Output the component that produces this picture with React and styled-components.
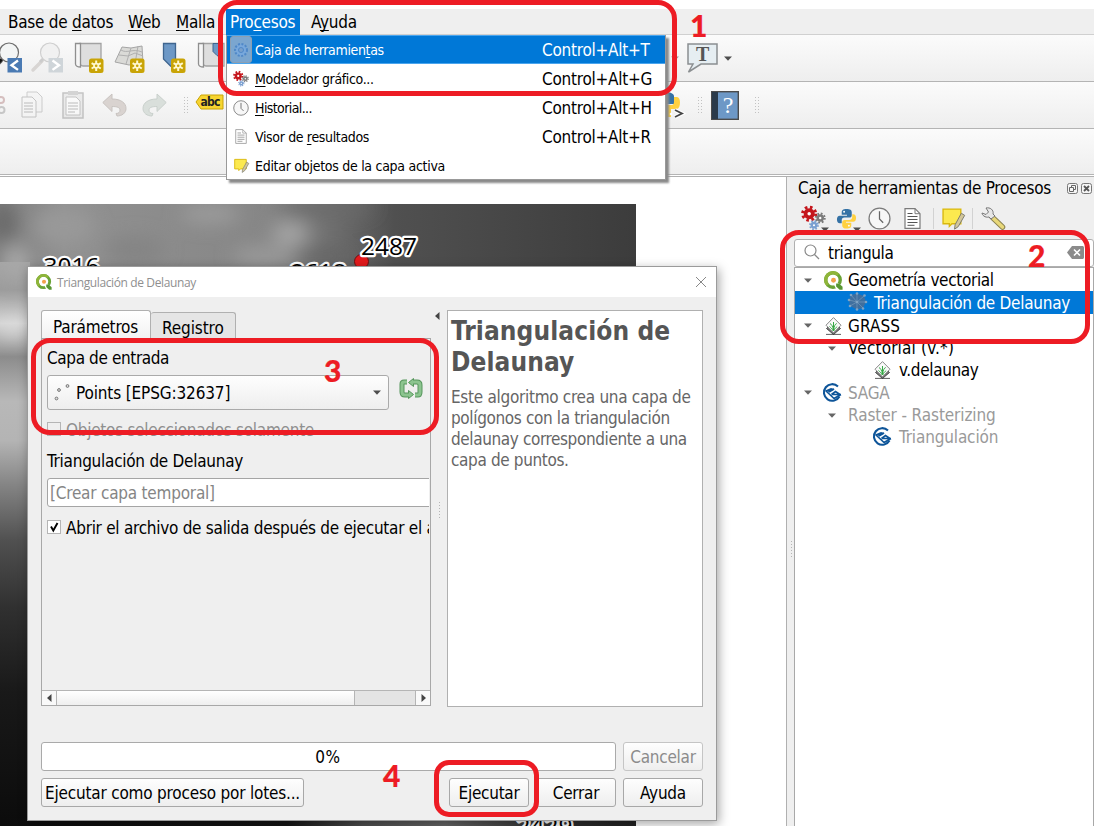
import React from "react";
import styled, { createGlobalStyle } from "styled-components";

const Global = createGlobalStyle`
  * { box-sizing: border-box; }
  html, body { margin: 0; padding: 0; }
  body {
    width: 1094px; height: 826px; overflow: hidden; background: #fff;
    font-family: "DejaVu Sans Condensed", "DejaVu Sans", sans-serif;
    font-stretch: condensed;
    font-size: 17px; letter-spacing: -0.26px; color: #000;
  }
  u { text-decoration-thickness: 1px; text-underline-offset: 2px; text-decoration-skip-ink: none; }
  svg { display: block; flex: none; overflow: visible; }
`;

const Screen = styled.div`
  position: relative; width: 1094px; height: 826px; overflow: hidden;
  display: flex; flex-direction: column; padding-top: 9px; background: #fff;
`;
const MenuBar = styled.nav`
  display: flex; height: 26px; flex: none; background: #efefef; border-bottom: 1px solid #d0d0d0;
`;
const MenuTitle = styled.div`
  width: ${(p) => p.$w}px; flex: none; padding-left: ${(p) => p.$pad}px;
  height: ${(p) => (p.$on ? 26 : 25)}px; line-height: 26px; white-space: nowrap;
  color: ${(p) => (p.$on ? "#fff" : "#000")}; background: ${(p) => (p.$on ? "#0078d7" : "none")};
`;
const ToolBar = styled.div`
  display: flex; align-items: center; flex: none; height: ${(p) => p.$h}px;
  background: linear-gradient(#fbfbfb, #eeeeee); border-bottom: 1px solid #b4b4b4;
`;
const Icon = styled.svg`
  margin-left: ${(p) => p.$ml || 0}px; margin-top: ${(p) => p.$mt || 0}px;
  opacity: ${(p) => p.$o ?? 1};
`;
const Grip = styled.div`
  width: 5px; height: 18px; flex: none; margin-left: ${(p) => p.$ml || 0}px;
  background: radial-gradient(circle, #c2c2c2 0.7px, transparent 1px) 0 0 / 3px 3px;
`;
const Work = styled.div`
  display: flex; flex: 1; margin-top: 1px; border-top: 1px solid #b0b0b0; min-height: 0;
`;
const MapPane = styled.main`
  width: 787px; flex: none; padding-top: 27px; border-right: 1px solid #b0b0b0; background: #fff; overflow: hidden;
`;
const Dock = styled.aside`
  flex: 1; display: flex; background: #efefef;
`;
const DockSplit = styled.div`
  width: 7px; flex: none; padding: 364px 0 0 4px;
`;
const Dots = styled.div`
  width: 1px; height: 17px;
  background: repeating-linear-gradient(#b5b5b5 0 1px, transparent 1px 3px);
`;
const DockBody = styled.div`
  flex: 1; display: flex; flex-direction: column; min-width: 0;
`;
const DockTitle = styled.div`
  display: flex; align-items: center; height: 22px; padding-left: 4px; white-space: nowrap;
  letter-spacing: -0.25px;
`;
const TitleText = styled.span`width: 269px; flex: none;`;
const DockTools = styled.div`
  display: flex; align-items: center; height: 40px; padding: 0 0 1px 7px;
`;
const Separator = styled.i`
  width: 1px; height: 21px; background: #d2d2d2; margin-left: ${(p) => p.$ml}px;
`;
const Search = styled.div`
  display: flex; align-items: center; height: 28px; border: 1px solid #b0b0b0; border-radius: 3px;
  background: #fff; padding: 0 9px; 
`;
const SearchText = styled.span`flex: 1; padding-left: 8px; letter-spacing: -0.34px;`;
const Tree = styled.div`
  flex: 1; border: 1px solid #a8a8a8; border-bottom: 0; background: #fff; padding-top: 1px;
`;
const TreeRow = styled.div`
  display: flex; align-items: center; height: ${(p) => p.$h || 22}px; padding-left: ${(p) => p.$in}px;
  color: ${(p) => (p.$sel ? "#fff" : p.$off ? "#9a9a9a" : "#000")};
  background: ${(p) => (p.$sel ? "#0078d7" : "none")}; white-space: nowrap;
  letter-spacing: ${(p) => p.$ls ?? -0.26}px;
  & > span { margin-left: ${(p) => p.$gap ?? 6}px; }
`;

const Popup = styled.div`
  position: absolute; left: 226px; top: 35px; width: 440px; height: 145px; background: #fff;
  border: 1px solid #999; border-top: 0; box-shadow: 3px 3px 2px #8a8a8a;
`;
const PopupRow = styled.div`
  display: flex; align-items: center; height: 29px; padding: 0 13px 0 3px;
  color: ${(p) => (p.$on ? "#fff" : "#000")}; background: ${(p) => (p.$on ? "#0078d7" : "none")};
  box-shadow: ${(p) => (p.$on ? "inset 0 1px #4aa5ee, inset 0 -1px #4aa5ee" : "none")};
`;
const IconCell = styled.div`
  width: 22px; height: 27px; display: flex; align-items: center; justify-content: center; border-radius: 3px;
  background: ${(p) => (p.$on ? "#7ba6cf" : "none")}; border: 1px solid ${(p) => (p.$on ? "#8c9fb2" : "transparent")};
`;
const PopupLabel = styled.span`
  flex: 1; font-size: 14px; padding-left: 3px; letter-spacing: ${(p) => p.$ls ?? -0.35}px; white-space: nowrap;
`;
const Shortcut = styled.span`width: 110px; flex: none; letter-spacing: -0.25px; white-space: nowrap;`;

const Dialog = styled.section`
  position: absolute; left: 27px; top: 266px; width: 690px; height: 555px; background: #efefef;
  border: 1px solid #9b9b9b; box-shadow: 2px 3px 10px rgba(0, 0, 0, 0.35);
  display: flex; flex-direction: column;
`;
const DialogTitle = styled.header`
  height: 30px; flex: none; display: flex; align-items: center; background: #fff; padding: 0 9px 0 8px;
  font: 12px "Open Sans", "Noto Sans", sans-serif; letter-spacing: -0.38px; color: #8f8f8f;
  & > span { flex: 1; padding-left: 5px; }
`;
const DialogMain = styled.div`
  display: flex; height: 397px; margin: 13px 13px 0; align-items: stretch;
`;
const LeftSide = styled.div`width: 390px; display: flex; flex-direction: column;`;
const Tabs = styled.div`display: flex; align-items: flex-end; height: 28px;`;
const Tab = styled.div`
  width: ${(p) => p.$w}px; height: ${(p) => (p.$on ? 28 : 26)}px; line-height: ${(p) => (p.$on ? 33 : 31)}px;
  padding-left: 11px; border: 1px solid #b0b0b0; border-bottom: 0; overflow: hidden;
  border-left: ${(p) => (p.$on ? "1px solid #b0b0b0" : 0)};
  border-radius: 3px 3px 0 0; background: ${(p) => (p.$on ? "linear-gradient(#fff, #f2f2f2)" : "#e5e5e5")};
  letter-spacing: ${(p) => p.$ls}px;
`;
const Panel = styled.div`
  flex: none; height: 368px; border: 1px solid #a8a8a8; display: flex; flex-direction: column; overflow: hidden;
`;
const Form = styled.div`
  flex: 1; width: 387px; overflow: hidden; padding: 7px 0 0 5px; white-space: nowrap;
`;
const Label = styled.div`
  height: 24px; line-height: 24px; margin-top: ${(p) => p.$mt || 0}px; letter-spacing: ${(p) => p.$ls}px;
`;
const ComboRow = styled.div`display: flex; margin-top: 5px;`;
const Combo = styled.div`
  display: flex; align-items: center; width: 342px; height: 35px; border: 1px solid #aaa; border-radius: 3px;
  background: linear-gradient(#fefefe, #eeeeee); padding: 0 7px 0 6px;
  & > span { flex: 1; padding-left: 6px; letter-spacing: -0.14px; }
`;
const CheckRow = styled.div`
  display: flex; align-items: center; height: 22px; margin-top: ${(p) => p.$mt}px;
  color: ${(p) => (p.$off ? "#8f8f8f" : "#000")}; letter-spacing: ${(p) => p.$ls}px;
`;
const Box = styled.div`
  width: 14px; height: 14px; border: 1px solid #b5b5b5; background: ${(p) => (p.$off ? "#efefef" : "#fff")};
  margin: 0 5px 2px 0; flex: none;
`;
const Field = styled.div`
  width: 400px; height: 29px; line-height: 28px; border: 1px solid #a5a5a5; border-radius: 3px; background: #fff;
  margin-top: 5px; padding-left: 2px; color: #858585; letter-spacing: -0.22px;
`;
const ScrollBar = styled.div`
  display: flex; height: 15px; flex: none; width: 388px; border-top: 1px solid #b5b5b5; background: #e4e4e4;
`;
const ScrollEnd = styled.div`
  width: 15px; display: flex; align-items: center; justify-content: center; background: #f9f9f9;
  border: solid #b5b5b5; border-width: ${(p) => (p.$right ? "0 0 0 1px" : "0 1px 0 0")};
`;
const Thumb = styled.div`
  width: 298px; background: linear-gradient(#fff, #efefef); border-right: 1px solid #b5b5b5; margin-right: auto;
`;
const Splitter = styled.div`
  width: 16px; display: flex; flex-direction: column; padding: 2px 0 0 4px;
`;
const SplitDots = styled(Dots)`margin: 182px 0 0 4px;`;
const Help = styled.article`
  width: 256px; border: 1px solid #b0b0b0; background: #fff; padding: 5px 0 0 3px; color: #666;
  line-height: 21px; white-space: nowrap;
  h1 { margin: 0 0 9px; font-size: 26px; line-height: 31px; color: #555; letter-spacing: 0.1px; }
`;
const HelpLine = styled.div`letter-spacing: ${(p) => p.$ls}px;`;
const Footer = styled.footer`display: flex; flex-direction: column; gap: 7px; margin: 35px 13px 0;`;
const FooterRow = styled.div`display: flex; gap: 7px;`;
const Progress = styled.div`
  flex: 1; height: 29px; border: 1px solid #aaa; border-radius: 3px; background: #fff;
  text-align: center; line-height: 29px; letter-spacing: 0.5px; padding-right: 1px;
`;
const Button = styled.button`
  width: ${(p) => p.$w || 80}px; height: 29px; padding: 1px 0 0; border: 1px solid ${(p) => (p.disabled ? "#c5c5c5" : "#a8a8a8")};
  border-radius: 3px; background: linear-gradient(#fefefe, #eeeeee); font: inherit; white-space: nowrap;
  letter-spacing: ${(p) => p.$ls ?? -0.26}px; color: ${(p) => (p.disabled ? "#8c8c8c" : "#000")};
  margin-right: ${(p) => p.$mr || 0};
`;
const Ring = styled.div`
  position: absolute; left: ${(p) => p.$x}px; top: ${(p) => p.$y}px; width: ${(p) => p.$w}px; height: ${(p) => p.$h}px;
  border: 5px solid #ed1c24; border-radius: ${(p) => p.$r || 19}px;
`;
const Step = styled.div`
  position: absolute; left: ${(p) => p.$x}px; top: ${(p) => p.$y}px; color: #ed1c24;
  font: 900 30px/30px Lato, sans-serif; letter-spacing: 0; -webkit-text-stroke: 0.2px #ed1c24;
`;

const Gear = ({ x, y, r, c, hole = "#fff" }) => (
  <g transform={`translate(${x} ${y})`}>
    <circle r={r * 0.83} fill="none" stroke={c} strokeWidth={r * 0.38} strokeDasharray={`${(r * 0.83 * Math.PI) / 8}`} />
    <circle r={r * 0.7} fill={c} />
    <circle r={r * 0.22} fill={hole} />
  </g>
);
const Gears = ({ w = 26, ...p }) => (
  <Icon {...p} width={w} height={w} viewBox="0 0 26 26">
    <Gear x={8.5} y={8} r={8.2} c="#c4161c" /><Gear x={20} y={12.5} r={5.6} c="#7b7b7b" /><Gear x={13.5} y={20} r={5} c="#7a9fd0" />
  </Icon>
);
const Caret = ({ c = "#4d4d4d", ...p }) => (
  <Icon {...p} width="8" height="5" viewBox="0 0 8 5"><path d="M0 .5h8L4 4.8z" fill={c} /></Icon>
);
const Star = () => (
  <g>
    <rect width="14.5" height="14.5" rx="2.5" fill="#c9a406" />
    <path d="M7.2 2v10.6M2.6 4.6l9.2 5.4M2.6 10l9.2-5.4" stroke="#fff8d0" strokeWidth="2" />
    <circle cx="7.2" cy="7.3" r="3" fill="#fff8d0" /><circle cx="7.2" cy="7.3" r="1.3" fill="#c9a406" />
  </g>
);
const Lens = ({ off, back, w, vb, ...p }) => (
  <Icon {...p} width={w} height="32" viewBox={vb}>
    <path d="M11 19 2 28" stroke={off ? "#d8d5d3" : "#555"} strokeWidth="3.500" strokeLinecap="round" />
    <path d="M13 16l-4 4" stroke={off ? "#ccc" : "#111"} strokeWidth="3" />
    <circle cx="19" cy="10.500" r="9.500" fill={off ? "#f1f1f1" : "#f3f5f5"} stroke={off ? "#cfcfcf" : "#6d6d6d"} strokeWidth="1.200" />
    <rect x="17.500" y="16" width="14.500" height="14.500" fill={off ? "#cfd5d9" : "#4a7ab3"} />
    <path d={back ? "M28 18.500l-6.500 4.700 6.500 4.700" : "M21.500 18.500l6.500 4.700-6.500 4.700"} fill="none" stroke="#fff" strokeWidth="2.400" />
  </Icon>
);
const ScrollMap = () => (
  <g>
    <path d="M6 1.500h21V24H9c-3 0-3-3-3-4z" fill="#dedede" stroke="#a2a2a2" strokeWidth="1.300" />
    <path d="M1.500 1.500h5V25c-3 0-5-1-5-3z" fill="#f6f6f6" stroke="#8f8f8f" strokeWidth="1.300" />
  </g>
);
const Note = ({ w = 22, ...p }) => (
  <Icon {...p} width={w} height={w} viewBox="0 0 22 22">
    <path d="M1 2h17v14H9.500L7 18.500V16H1z" fill="#fce94f" stroke="#d9b80e" strokeWidth="1.300" />
    <path d="M18.500 6l-6 11-.5 4.200 3.500-2.400L21.700 8z" fill="#d3c79a" stroke="#77776d" strokeWidth=".9" />
  </Icon>
);
const Clock = ({ w = 22, ...p }) => (
  <Icon {...p} width={w} height={w} viewBox="0 0 22 22">
    <circle cx="11" cy="11" r="10" fill="#f7f7f7" stroke="#7b7b7b" strokeWidth="1.200" />
    <path d="M11 4v7.500l3.500 3.500" fill="none" stroke="#666" strokeWidth="1.200" />
  </Icon>
);
const Doc = ({ w = 17, h = 21, ...p }) => (
  <Icon {...p} width={w} height={h} viewBox="0 0 17 21">
    <path d="M1 .7h10l5 5v14.600H1z" fill="#fff" stroke="#7b7b7b" strokeWidth="1.200" /><path d="M11 .7v5h5" fill="none" stroke="#7b7b7b" />
    <path d="M3.500 5.500h5M3.500 8.500h10M3.500 11.500h10M3.500 14.500h10M3.500 17.300h7" stroke="#555" />
  </Icon>
);
const Python = ({ w = 21, ...p }) => (
  <Icon {...p} width={w} height={w} viewBox="0 0 22 22">
    <path d="M11 1C7 1 6 2.500 6 4.500V7h5.500v1H4C2 8 1 9.500 1 12s1 4 3 4h2v-3c0-2 1-3 3-3h5c1.500 0 2.500-1 2.500-2.500v-3C16.500 2 15 1 11 1z" fill="#3572a5" />
    <path d="M11 21.500c4 0 5-1.500 5-3.500v-2.500h-5.500v-1H18c2 0 3-1.500 3-4s-1-4-3-4h-1v3c0 2-1.500 3-3 3H9c-1.500 0-2.500 1-2.500 2.500v3c0 2.500 1.500 3.500 4.500 3.500z" fill="#ffd140" />
    <circle cx="8.500" cy="4" r="1" fill="#fff" /><circle cx="13.500" cy="18.500" r="1" fill="#fff" />
  </Icon>
);
const QLogo = ({ w = 18, ...p }) => (
  <Icon {...p} width={w} height={w} viewBox="0 0 18 18">
    <circle cx="8.500" cy="8.500" r="6.900" fill="none" stroke="#6aa336" strokeWidth="3.200" />
    <path d="M3.600 13.400A6.900 6.900 0 0 1 13.400 3.600" fill="none" stroke="#8fb53a" strokeWidth="3.200" />
    <path d="M10 9.500l8 5V18h-6l-3-6z" fill="#fff" />
    <path d="M11.500 11.800h2.800l3.300 3.200v2.800h-2.800l-3.300-3.200z" fill="#589632" />
    <circle cx="9" cy="8.800" r="2.300" fill="#f3a24c" />
  </Icon>
);
const Grass = (p) => (
  <Icon {...p} width="17" height="18" viewBox="0 0 17 18">
    <path d="M8.500 4.500 15.500 11.500l-7 6-7-6zM1 17.400h15" fill="#777" stroke="#333" strokeWidth=".8" />
    <path d="M8.500.6 16 8.200l-7.500 7.600L1 8.200z" fill="#fafafa" stroke="#8a8a8a" />
    <path d="M8.500 14V5M8.300 13C8 9 6 7 5 6.500M8.700 13c.3-4 1.500-6 3-6.500M8.300 14C7 11.500 5.500 10.500 4.500 9.500M8.700 14c1-2.500 2.500-3.500 3.500-4.500" fill="none" stroke="#35a845" strokeWidth="1" />
  </Icon>
);
const Saga = (p) => (
  <Icon {...p} width="20" height="20" viewBox="0 0 20 20">
    <path d="M16 3.500A8.300 8.300 0 1 0 17.500 13.500" fill="none" stroke="#0e5599" strokeWidth="2.100" />
    <path d="M3 7.500 9 5l3.500 1-5.500 3z" fill="#0e5599" />
    <path d="M7 9l5-3M3.500 7.500 12 15.500M9.500 11.500H19M12 15.500l7-4M9.500 11.500l4-3 4.500 3" fill="none" stroke="#0e5599" strokeWidth="1.700" />
  </Icon>
);
const Mesh = (p) => (
  <Icon {...p} width="19" height="19" viewBox="0 0 19 19">
    <path d="M3 3l6-1.500L16 4l2 6-3 6-6 1.500L2 14l-1-6z" fill="#3f6f9f" />
    <path d="M3 3l6 7 7-6M1 8l8 2-7 4M9 10l9 0M9 10l6 6M9 10v7.500M9 1.500V10" fill="none" stroke="#6f93b5" strokeWidth=".8" />
    <g fill="#7fa3c4"><circle cx="3" cy="3" r="1.300" /><circle cx="9" cy="1.500" r="1.300" /><circle cx="16.500" cy="3.500" r="1.300" /><circle cx="18" cy="10" r="1.300" /><circle cx="15" cy="16.500" r="1.300" /><circle cx="9" cy="17.500" r="1.300" /><circle cx="2" cy="14" r="1.300" /><circle cx="1" cy="8" r="1.300" /><circle cx="9" cy="10" r="1.300" /></g>
  </Icon>
);
const Undo = ({ flip, ...p }) => (
  <Icon {...p} width="25" height="24" viewBox="0 0 25 24">
    <path transform={flip ? "matrix(-1 0 0 1 25 0)" : undefined}
      d="M.8 9.500 10 1v5c9 0 14 4 14 9.500 0 4.500-4 7.500-9 7.500l-1-2.500c3 0 4-1.500 4-3.500 0-2.500-3-3.500-8-3.500v5z"
      fill={flip ? "#d9dfdb" : "#d9d3d0"} stroke={flip ? "#c9d0cc" : "#c8c3c0"} />
  </Icon>
);

const MapCanvas = styled.svg`
  overflow: hidden; font-stretch: normal;
`;
const MapView = () => (
  <MapCanvas width="636" height="622" viewBox="0 204 636 622">
    <defs>
      <linearGradient id="east" x1="0" x2="1">
        <stop offset="0" stopColor="#808080" /><stop offset=".1" stopColor="#919191" /><stop offset=".45" stopColor="#858585" />
        <stop offset=".53" stopColor="#6c6c6c" /><stop offset=".62" stopColor="#505050" /><stop offset="1" stopColor="#3c3c3c" />
      </linearGradient>
      <linearGradient id="west" x1="0" x2="0" y1="0" y2="1">
        <stop offset="0" stopColor="#a4a4a4" /><stop offset=".05" stopColor="#9c9c9c" />
        <stop offset=".11" stopColor="#d4d4d4" /><stop offset=".17" stopColor="#8c8c8c" /><stop offset=".25" stopColor="#b8b8b8" />
        <stop offset=".32" stopColor="#b4b4b4" /><stop offset=".4" stopColor="#848484" /><stop offset=".5" stopColor="#505050" />
        <stop offset=".62" stopColor="#303030" /><stop offset=".77" stopColor="#191919" /><stop offset="1" stopColor="#0c0c0c" />
      </linearGradient>
      <linearGradient id="south" x1="0" x2="1"><stop offset="0" stopColor="#0c0c0c" /><stop offset=".45" stopColor="#151515" /><stop offset=".57" stopColor="#4e4e4e" /><stop offset=".7" stopColor="#666" /><stop offset=".85" stopColor="#333" /><stop offset="1" stopColor="#222" /></linearGradient>
      <filter id="soft" x="-50%" y="-50%" width="200%" height="200%"><feGaussianBlur stdDeviation="9" /></filter>
    </defs>
    <rect y="204" width="636" height="70" fill="url(#east)" />
    <rect y="262" width="30" height="558" fill="url(#west)" />
    <rect y="818" width="636" height="8" fill="url(#south)" />
    <g filter="url(#soft)">
      <ellipse cx="3" cy="222" rx="14" ry="20" fill="#6a6a6a" />
      <ellipse cx="16" cy="262" rx="14" ry="16" fill="#a8a8a8" />
      <ellipse cx="64" cy="226" rx="30" ry="18" fill="#999" />
      <ellipse cx="135" cy="250" rx="30" ry="14" fill="#848484" />
      <ellipse cx="210" cy="214" rx="30" ry="10" fill="#9b9b9b" />
      <ellipse cx="290" cy="234" rx="18" ry="12" fill="#a4a4a4" />
      <ellipse cx="262" cy="256" rx="30" ry="10" fill="#9a9a9a" />
      <ellipse cx="325" cy="208" rx="50" ry="8" fill="#6a6a6a" />
      <ellipse cx="325" cy="256" rx="28" ry="6" fill="#606060" />
      <ellipse cx="12" cy="328" rx="7" ry="9" fill="#e4e4e4" />
    </g>
    <circle cx="361.500" cy="261.500" r="7" fill="#e31a1c" stroke="#701010" />
    <g fontFamily="Open Sans, Noto Sans, sans-serif" fontSize="24.500" letterSpacing="0" fill="#000" stroke="#fff" strokeWidth="4.500" strokeLinejoin="round" paintOrder="stroke">
      <text x="43.500" y="275">3016</text><text x="290.500" y="281">2618</text><text x="361" y="254.500">2487</text><text x="516.500" y="835">2429</text>
    </g>
  </MapCanvas>
);

export default function App() {
  return (
    <>
      <Global />
      <Screen>
        <MenuBar>
          <MenuTitle $w={128} $pad={8}>Base de <u>d</u>atos</MenuTitle>
          <MenuTitle $w={48} $pad={0}><u>W</u>eb</MenuTitle>
          <MenuTitle $w={50} $pad={0}><u>M</u>alla</MenuTitle>
          <MenuTitle $w={74} $pad={4} $on>Pro<u>c</u>esos</MenuTitle>
          <MenuTitle $w={70} $pad={11}>A<u>y</u>uda</MenuTitle>
        </MenuBar>
        <ToolBar $h={47}>
          <Lens back w={22} vb="10 0 22 32" />
          <Lens off $ml={9} w={32} vb="0 0 32 32" />
          <Icon $ml={11} width="31" height="32" viewBox="0 0 31 32"><ScrollMap /><g transform="translate(15 16.500)"><Star /></g></Icon>
          <Icon $ml={9} width="31" height="32" viewBox="0 0 31 32">
            <path d="M8 5l9 1 11-2 1 17-14 2-14-3z" fill="#dadad7" stroke="#a5a5a5" />
            <path d="M5 13l9 1 7-3 8 3M17 6l-5 16M24 4l-3 18M7 8c6 4 12-2 21 2" fill="none" stroke="#b0b0b0" />
            <g transform="translate(16 16.500)"><Star /></g>
          </Icon>
          <Icon $ml={17} width="24" height="32" viewBox="0 0 24 32"><path d="M1.500 1.500h12V27l-5-3-7-7z" fill="#6d98c6" stroke="#3f658f" strokeWidth="1.300" /><g transform="translate(9 16.500)"><Star /></g></Icon>
          <Icon $ml={11} width="29" height="32" viewBox="0 0 29 32"><ScrollMap /><path d="M16 1.500h8v14l-4-2-4-4z" fill="#6d98c6" stroke="#3f658f" /></Icon>
          <Caret $ml={445} c="#999" />
          <Icon $ml={8} width="31" height="30" viewBox="0 0 31 30">
            <path d="M1 1h29v20H14L1.500 29 6 21H1z" fill="#e6eef2" stroke="#8b8f91" strokeWidth="1.500" />
            <text x="15.500" y="18" textAnchor="middle" fontFamily="Liberation Serif, serif" fontWeight="700" fontSize="20" fill="#555">T</text>
          </Icon>
          <Caret $ml={6} />
        </ToolBar>
        <ToolBar $h={47}>
          <Icon width="6" height="22" viewBox="0 0 6 22" $o={0.6}><circle cx="1" cy="6" r="3" fill="none" stroke="#c09a9a" strokeWidth="2" /><circle cx="1.500" cy="16" r="3" fill="none" stroke="#aaa" strokeWidth="2" /></Icon>
          <Icon $ml={15} width="23" height="28" viewBox="0 0 23 28" $o={0.45}>
            <path d="M6 1h10l5 5v15H6z" fill="#f2f2f2" stroke="#999" /><path d="M1 6h10l4 4v16H1z" fill="#f7f7f7" stroke="#888" /><path d="M3 12h9M3 15h9M3 18h9M3 21h9" stroke="#777" />
          </Icon>
          <Icon $ml={18} width="23" height="28" viewBox="0 0 23 28" $o={0.45}>
            <rect x="1" y="2" width="20" height="25" fill="#ddd" stroke="#888" strokeWidth="1.500" /><rect x="6" y="0" width="10" height="4" fill="#aaa" /><path d="M4 6h10l4 4v14H4z" fill="#fff" stroke="#888" /><path d="M6 12h10M6 15h10M6 18h10M6 21h7" stroke="#777" />
          </Icon>
          <Undo $ml={17} /><Undo $ml={15} flip />
          <Grip $ml={16} />
          <Icon $ml={7} $mt={-7} width="29" height="16" viewBox="0 0 29 16">
            <path d="M1 8 6 1h22v14H6z" fill="#f7d431" stroke="#c9a406" />
            <text x="5.500" y="12" fontSize="12" fontWeight="700" letterSpacing="0" textLength="20" fill="#222">abc</text>
          </Icon>
          <Icon $ml={435} width="26" height="30" viewBox="0 0 26 30">
            <path d="M2 6c0-5 12-5 13 0v8H2z" fill="#3572a5" /><path d="M15 7h3c4 0 4 11 0 12h-6v8H2V15h10c3 0 3-2 3-4z" fill="#ffd140" /><circle cx="12" cy="24" r="1.300" fill="#fff" />
            <path d="M16 20l7 3.500-7 3.500" fill="none" stroke="#fff" strokeWidth="4" /><path d="M16 20l7 3.500-7 3.500" fill="none" stroke="#444" strokeWidth="1.800" />
          </Icon>
          <Grip $ml={12} />
          <Icon $ml={9} width="28" height="29" viewBox="0 0 28 29">
            <rect x=".7" y=".7" width="26.600" height="27.600" fill="#6d98c6" stroke="#4b4b4b" strokeWidth="1.400" /><rect x="1" y="1" width="6" height="27" fill="#2a3a4a" />
            <text x="17" y="21.500" textAnchor="middle" fontFamily="Liberation Serif, serif" fontSize="24" fill="#fff">?</text>
          </Icon>
          <Grip $ml={15} />
        </ToolBar>
        <ToolBar $h={46} />
        <Work>
          <MapPane><MapView /></MapPane>
          <Dock>
            <DockSplit><Dots /></DockSplit>
            <DockBody>
              <DockTitle>
                <TitleText>Caja de herramientas de Procesos</TitleText>
                <Icon $ml={0} width="11" height="11" viewBox="0 0 11 11"><rect x=".5" y=".5" width="10" height="10" rx="2" fill="#f5f5f5" stroke="#777" /><path d="M4.500 4V2.500h4v4H7M2.500 4.500H6.500v4h-4z" fill="none" stroke="#666" /></Icon>
                <Icon $ml={3} width="11" height="11" viewBox="0 0 11 11"><rect x=".5" y=".5" width="10" height="10" rx="2" fill="#f5f5f5" stroke="#777" /><path d="M3 3l5 5M8 3l-5 5" stroke="#555" strokeWidth="1.800" /></Icon>
              </DockTitle>
              <DockTools>
                <Gears w={25} /><Caret $ml={-5} $mt={21} />
                <Python $ml={7} w={21} /><Caret $ml={-4} $mt={21} />
                <Clock $ml={7} w={23} />
                <Doc $ml={13} />
                <Separator $ml={12} /><Note $ml={8} w={23} /><Separator $ml={7} />
                <Icon $ml={8} width="25" height="24" viewBox="0 0 25 24">
                  <path d="M11 10 21.500 20" stroke="#8a8250" strokeWidth="5.500" strokeLinecap="round" /><path d="M12 11l9.500 9" stroke="#e8d87a" strokeWidth="3.600" strokeLinecap="round" />
                  <path d="M5 1c4-1 8 2 7 6l2 2-4 3-2-2C4 11 1 8 1 6l4 1.500L7.500 5z" fill="#e6e6e6" stroke="#777" />
                </Icon>
              </DockTools>
              <Search>
                <Icon $mt={-2} width="16" height="16" viewBox="0 0 16 16"><circle cx="6.500" cy="6.500" r="5.500" fill="none" stroke="#888" strokeWidth="1.200" /><path d="M10.500 10.500l4.500 4.500" stroke="#888" strokeWidth="1.300" /></Icon>
                <SearchText>triangula</SearchText>
                <Icon $mt={-2} width="17" height="13" viewBox="0 0 17 13"><path d="M0 6.500 5 0h10c1.500 0 2 .5 2 2v9c0 1.500-.5 2-2 2H5z" fill="#8b8b8b" /><path d="M7 3.500l6 6M13 3.500l-6 6" stroke="#fff" strokeWidth="1.600" /></Icon>
              </Search>
              <Tree>
                <TreeRow $in={9} $h={22} $ls={-0.33} $gap={5}><Caret c="#666" /><QLogo $ml={12} w={19} /><span>Geometría vectorial</span></TreeRow>
                <TreeRow $in={53} $h={23} $sel $ls={-0.26} $gap={7}><Mesh $mt={-3} /><span>Triangulación de Delaunay</span></TreeRow>
                <TreeRow $in={9} $h={23} $ls={0.05}><Caret c="#666" /><Grass $ml={13} /><span>GRASS</span></TreeRow>
                <TreeRow $in={33} $h={22} $gap={12} $ls={0.17}><Caret c="#666" /><span>Vectorial (v.*)</span></TreeRow>
                <TreeRow $in={79} $h={22} $gap={8} $ls={-0.36}><Grass /><span>v.delaunay</span></TreeRow>
                <TreeRow $in={9} $h={23} $off><Caret c="#666" /><Saga $ml={10} /><span>SAGA</span></TreeRow>
                <TreeRow $in={33} $h={22} $gap={12} $off $ls={-0.1}><Caret c="#666" /><span>Raster - Rasterizing</span></TreeRow>
                <TreeRow $in={77} $h={22} $gap={7} $off $ls={-0.15}><Saga /><span>Triangulación</span></TreeRow>
              </Tree>
            </DockBody>
          </Dock>
        </Work>

        <Popup>
          <PopupRow $on><IconCell $on><Icon width="16" height="16" viewBox="0 0 16 16"><circle cx="8" cy="8" r="6" fill="#78a8dc" stroke="#4f88c8" strokeDasharray="2 1.500" strokeWidth="2" /><circle cx="8" cy="8" r="2.500" fill="#78a0cc" stroke="#4f88c8" /></Icon></IconCell><PopupLabel>Caja de herramien<u>t</u>as</PopupLabel><Shortcut>Control+Alt+T</Shortcut></PopupRow>
          <PopupRow><IconCell><Gears w={16} /></IconCell><PopupLabel><u>M</u>odelador gráfico...</PopupLabel><Shortcut>Control+Alt+G</Shortcut></PopupRow>
          <PopupRow><IconCell><Clock w={16} /></IconCell><PopupLabel $ls={-0.6}><u>H</u>istorial...</PopupLabel><Shortcut>Control+Alt+H</Shortcut></PopupRow>
          <PopupRow><IconCell><Doc w={12} h={15} $o={0.75} /></IconCell><PopupLabel>Visor de <u>r</u>esultados</PopupLabel><Shortcut>Control+Alt+R</Shortcut></PopupRow>
          <PopupRow><IconCell><Note w={15} /></IconCell><PopupLabel $ls={-0.28}>Editar objetos de la capa activa</PopupLabel></PopupRow>
        </Popup>

        <Dialog>
          <DialogTitle>
            <QLogo w={16} /><span>Triangulación de Delaunay</span>
            <Icon width="12" height="12" viewBox="0 0 12 12"><path d="M1 1l10 10M11 1L1 11" stroke="#888" /></Icon>
          </DialogTitle>
          <DialogMain>
            <LeftSide>
              <Tabs><Tab $w={110} $on $ls={-0.2}>Parámetros</Tab><Tab $w={85} $ls={-0.1}>Registro</Tab></Tabs>
              <Panel>
                <Form>
                  <Label $ls={-0.38}>Capa de entrada</Label>
                  <ComboRow>
                    <Combo>
                      <Icon width="16" height="17" viewBox="0 0 16 17"><g fill="#ddd" stroke="#777"><circle cx="2.500" cy="14.500" r="1.400" /><circle cx="5" cy="6" r="1.400" /><circle cx="13.500" cy="2" r="1.400" /></g></Icon>
                      <span>Points [EPSG:32637]</span><Caret />
                    </Combo>
                    <Icon $ml={10} $mt={3} width="24" height="21" viewBox="0 0 24 21">
                      <path d="M8 4H5Q3 4 3 6v8q0 3 3 3h5M16 17h3q2 0 2-3V7q0-3-3-3h-5" stroke="#56965c" strokeWidth="5" fill="none" />
                      <path d="M9.500 12.500v8l5-4zM14.500.5v8l-5-4z" fill="#8cc48f" stroke="#56965c" />
                      <path d="M8 4H5Q3 4 3 6v8q0 3 3 3h5M16 17h3q2 0 2-3V7q0-3-3-3h-5" stroke="#8cc48f" strokeWidth="3" fill="none" />
                    </Icon>
                  </ComboRow>
                  <CheckRow $mt={9} $off $ls={-0.27}><Box $off />Objetos seleccionados solamente</CheckRow>
                  <Label $mt={8} $ls={-0.26}>Triangulación de Delaunay</Label>
                  <Field>[Crear capa temporal]</Field>
                  <CheckRow $mt={10} $ls={-0.27}><Box><svg width="12" height="12" viewBox="0 0 12 12"><path d="M3 5.500l2.300 4L9.500 2" fill="none" stroke="#000" strokeWidth="1.900" /></svg></Box>Abrir el archivo de salida después de ejecutar el algoritmo</CheckRow>
                </Form>
                <ScrollBar>
                  <ScrollEnd><svg width="5" height="8" viewBox="0 0 5 8"><path d="M4.500 0v8L0 4z" fill="#444" /></svg></ScrollEnd>
                  <Thumb />
                  <ScrollEnd $right><svg width="5" height="8" viewBox="0 0 5 8"><path d="M.5 0v8L5 4z" fill="#444" /></svg></ScrollEnd>
                </ScrollBar>
              </Panel>
            </LeftSide>
            <Splitter><svg width="5" height="8" viewBox="0 0 5 8"><path d="M4.500 0v8L0 4z" fill="#444" /></svg><SplitDots /></Splitter>
            <Help>
              <h1>Triangulación de<br />Delaunay</h1>
              <HelpLine $ls={-0.29}>Este algoritmo crea una capa de</HelpLine>
              <HelpLine $ls={-0.36}>polígonos con la triangulación</HelpLine>
              <HelpLine $ls={-0.39}>delaunay correspondiente a una</HelpLine>
              <HelpLine $ls={-0.36}>capa de puntos.</HelpLine>
            </Help>
          </DialogMain>
          <Footer>
            <FooterRow><Progress>0%</Progress><Button disabled>Cancelar</Button></FooterRow>
            <FooterRow><Button $w={263} $mr="auto" $ls={-0.19}>Ejecutar como proceso por lotes...</Button><Button>Ejecutar</Button><Button>Cerrar</Button><Button>Ayuda</Button></FooterRow>
          </Footer>
        </Dialog>

        <Ring $x={218} $y={0} $w={459} $h={96} />
        <Ring $x={780} $y={230} $w={310} $h={114} />
        <Ring $x={31} $y={338} $w={408} $h={97} />
        <Ring $x={434} $y={760} $w={105} $h={57} $r={15} />
        <Step $x={690} $y={10}>1</Step>
        <Step $x={1028} $y={240}>2</Step>
        <Step $x={324} $y={355}>3</Step>
        <Step $x={383} $y={760}>4</Step>
      </Screen>
    </>
  );
}
